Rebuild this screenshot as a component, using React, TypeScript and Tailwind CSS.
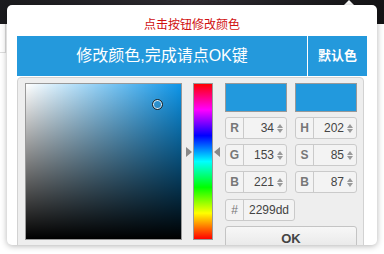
import React from "react";

const font = "font-['Liberation_Sans','Noto_Sans_CJK_SC',sans-serif]";

function Spinner() {
  return (
    <div className="flex flex-col items-center justify-center gap-[1px] w-[9px] mr-[2px]">
      <span className="w-0 h-0 border-x-[3.5px] border-x-transparent border-b-[4px] border-b-[#999]" />
      <span className="w-0 h-0 border-x-[3.5px] border-x-transparent border-t-[4px] border-t-[#999]" />
    </div>
  );
}

function Field({ label, value }: { label: string; value: string }) {
  return (
    <div className="flex h-[22px] w-[62px] rounded-[3px] border border-[#cacaca] bg-[#f3f3f3]">
      <div className="flex w-[18px] items-center justify-center border-r border-[#cacaca] text-[12px] font-bold text-[#777]">
        {label}
      </div>
      <div className="flex flex-1 items-center justify-end pr-[1px] text-[12px] text-[#444]">{value}</div>
      <Spinner />
    </div>
  );
}

export default function App() {
  return (
    <div className={`relative w-[384px] h-[254px] overflow-hidden bg-white ${font}`}>
      {/* page behind the popover */}
      <div className="h-[24px] bg-gradient-to-r from-[#1b1b1e] via-[#2e2b31] to-[#141416]" />
      <div className="ml-[5px] h-[28px] w-[1px] bg-[#ddd]" />
      <div className="h-[1px] w-[6px] bg-[#ddd]" />

      {/* popover arrow */}
      <div className="absolute left-[343px] top-[0px] w-0 h-0 border-x-[6px] border-x-transparent border-b-[6px] border-b-white" />

      {/* popover */}
      <div className="absolute left-[7px] top-[5px] w-[370px] h-[240px] overflow-hidden rounded-[5px] bg-white px-[10px] shadow-[0_1px_6px_rgba(0,0,0,0.3)]">
        <div className="pt-[13px] mb-[4px] text-center text-[12px] leading-[14px] text-[#d01010]">点击按钮修改颜色</div>

        <div className="flex h-[40px] bg-[#2499dc] text-white">
          <div className="flex flex-1 items-center justify-center border-r border-white text-[16px]">修改颜色,完成请点OK键</div>
          <div className="flex w-[59px] items-center justify-center text-[13px] font-bold">默认色</div>
        </div>

        {/* colour picker */}
        <div className="mt-[1px] flex w-[347px] h-[200px] rounded-t-[4px] border border-[#d2d2d2] bg-[#eeeeee] pl-[7px] pt-[5px]">
          <div className="relative h-[157px] w-[157px] border border-[#999] bg-[#0d95e8] bg-[image:linear-gradient(to_top,#000,transparent),linear-gradient(to_right,#fff,transparent)]">
            <div className="absolute left-[126px] top-[15px] h-[11px] w-[11px] rounded-full border border-[#222] shadow-[inset_0_0_0_1px_#e8f4ff]" />
          </div>

          <div className="relative ml-[11px] h-[157px] w-[20px] border border-[#999] bg-[linear-gradient(to_bottom,#f00,#f0f,#00f,#0ff,#0f0,#ff0,#f00)]">
            <span className="absolute left-[-8px] top-[63px] w-0 h-0 border-y-[5px] border-y-transparent border-l-[6px] border-l-[#888]" />
            <span className="absolute left-[20px] top-[63px] w-0 h-0 border-y-[5px] border-y-transparent border-r-[6px] border-r-[#888]" />
          </div>

          <div className="ml-[12px] flex w-[132px] flex-col">
            <div className="flex gap-[8px]">
              <div className="h-[29px] w-[62px] border border-[#999] bg-[#2299dd]" />
              <div className="h-[29px] w-[62px] border border-[#999] bg-[#2299dd]" />
            </div>
            <div className="mt-[5px] flex gap-[8px]">
              <Field label="R" value="34" />
              <Field label="H" value="202" />
            </div>
            <div className="mt-[5px] flex gap-[8px]">
              <Field label="G" value="153" />
              <Field label="S" value="85" />
            </div>
            <div className="mt-[5px] flex gap-[8px]">
              <Field label="B" value="221" />
              <Field label="B" value="87" />
            </div>
            <div className="mt-[6px] flex h-[22px] w-[70px] rounded-[3px] border border-[#cacaca] bg-[#f3f3f3]">
              <div className="flex w-[18px] items-center justify-center border-r border-[#cacaca] text-[12px] text-[#777]">#</div>
              <div className="flex flex-1 items-center pl-[5px] text-[12px] text-[#444]">2299dd</div>
            </div>
            <button className="mt-[5px] h-[26px] w-[132px] rounded-[3px] border border-[#c4c4c4] bg-gradient-to-b from-[#f7f7f7] to-[#e6e6e6] text-[13px] font-bold text-[#444]">
              OK
            </button>
          </div>
        </div>
      </div>
    </div>
  );
}
